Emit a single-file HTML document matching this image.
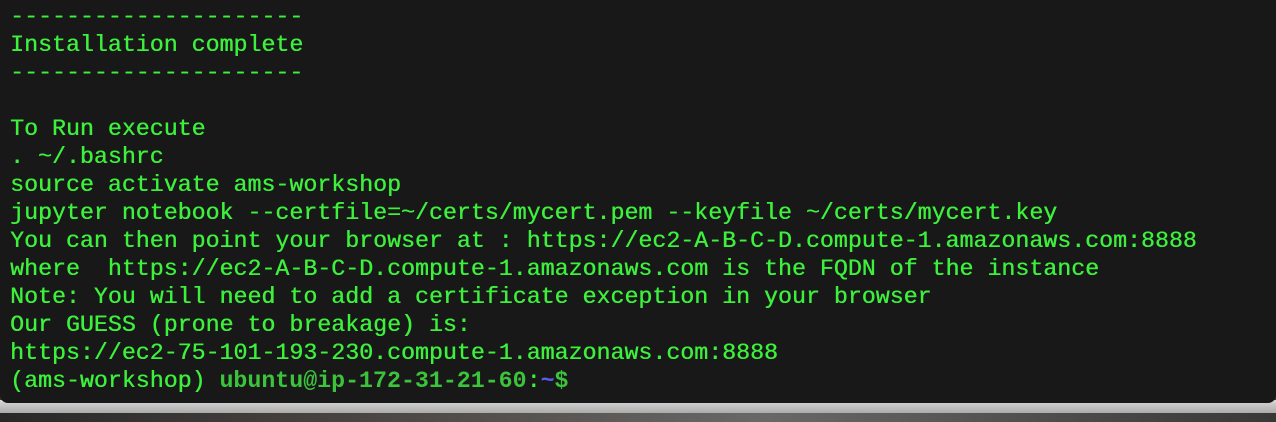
<!DOCTYPE html>
<html><head><style>
html,body{margin:0;padding:0;width:1276px;height:422px;overflow:hidden;background:#3a3836;}
.strip{position:absolute;left:0;top:400px;width:1276px;height:14px;background:linear-gradient(#d8d8d8,#a8a8a8);}
.photo{position:absolute;left:0;top:413px;width:1276px;height:9px;background:linear-gradient(90deg,#2a2826,#4a4744 30%,#6a6866 60%,#3a3836);}
.win{position:absolute;left:0;top:0;width:1276px;height:403px;background:#181818;border-radius:0 0 8px 8px;}
pre{margin:0;padding:3px 0 0 10px;font-family:"Liberation Mono",monospace;font-size:23.27px;line-height:28px;color:#3cf03c;text-shadow:0.4px 0 0 #3cf03c;}
.u{color:#3bc43b;font-weight:bold;text-shadow:none;}
.t{color:#5b5bf0;font-weight:bold;text-shadow:none;}
</style></head><body>
<div class="strip"></div><div class="photo"></div>
<div class="win"><pre>---------------------
Installation complete
---------------------

To Run execute
. ~/.bashrc
source activate ams-workshop
jupyter notebook --certfile=~/certs/mycert.pem --keyfile ~/certs/mycert.key
You can then point your browser at : https://ec2-A-B-C-D.compute-1.amazonaws.com:8888
where  https://ec2-A-B-C-D.compute-1.amazonaws.com is the FQDN of the instance
Note: You will need to add a certificate exception in your browser
Our GUESS (prone to breakage) is:
https://ec2-75-101-193-230.compute-1.amazonaws.com:8888
(ams-workshop) <span class="u">ubuntu@ip-172-31-21-60</span>:<span class="t">~</span><span class="u">$</span></pre></div>
</body></html>
